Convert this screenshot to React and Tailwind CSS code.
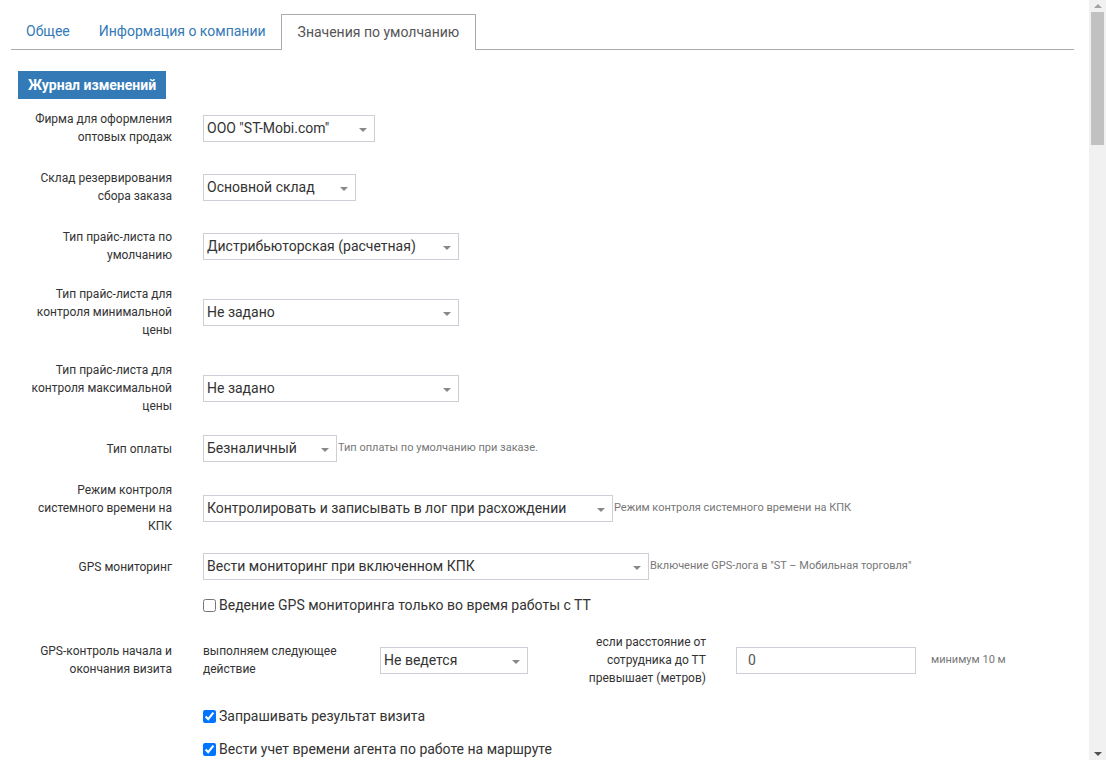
import { useState } from 'react';

const font = { fontFamily: 'Roboto, "Noto Sans", sans-serif' };

// выпадающий список в стиле bootstrap
const Select = ({ value, width }) => (
    <div
        className="relative h-[27px] border border-[#ccd0d6] bg-white flex items-center pl-[3px] text-[14px] text-[#333] shrink-0"
        style={{ width }}
    >
        <span className="whitespace-nowrap">{value}</span>
        <span className="absolute right-[7px] top-[12px] w-0 h-0 border-l-[4px] border-r-[4px] border-t-[4px] border-l-transparent border-r-transparent border-t-[#888]" />
    </div>
);

const Label = ({ children }) => (
    <div className="ml-[8px] w-[146px] shrink-0 text-right text-[12px] leading-[18px] text-[#333]">{children}</div>
);

const Help = ({ children }) => (
    <span className="ml-[1px] text-[11px] text-[#777] whitespace-nowrap">{children}</span>
);

const Row = ({ label, children, className = '' }) => (
    <div className={`flex items-center ${className}`}>
        <Label>{label}</Label>
        <div className="ml-[31px] flex items-center">{children}</div>
    </div>
);

const Check = ({ label, checked, className = '' }) => {
    const [on, setOn] = useState(checked);
    return (
        <label className={`flex items-center pl-[185px] h-[20px] text-[14px] text-[#333] ${className}`}>
            <input
                type="checkbox"
                checked={on}
                onChange={() => setOn((v) => !v)}
                className="w-[13px] h-[13px] m-0 mr-[3px] accent-[#0075ff]"
            />
            <span>{label}</span>
        </label>
    );
};

const tabs = [
    { title: 'Общее', cls: 'px-[15px]' },
    { title: 'Информация о компании', cls: 'pl-[14px] pr-[15px]' },
    { title: 'Значения по умолчанию', cls: 'px-[16px]', active: true },
];

const App = () => {
    return (
        <div className="flex h-[760px] w-[1106px] overflow-hidden bg-white" style={font}>
            <div className="flex-1 overflow-hidden">
                {/* вкладки */}
                <div className="mt-[14px] ml-[11px] mr-[15px] flex border-b border-[#aaa] h-[36px]">
                    {tabs.map((t) =>
                        t.active ? (
                            <div
                                key={t.title}
                                className={`${t.cls} h-[36px] -mb-px bg-white border border-b-0 border-[#aaa] flex items-center text-[14px] text-[#555]`}
                            >
                                {t.title}
                            </div>
                        ) : (
                            <div key={t.title} className={`${t.cls} h-[35px] flex items-center text-[14px] text-[#337ab7]`}>
                                {t.title}
                            </div>
                        )
                    )}
                </div>

                <div className="pl-[18px]">
                    <button className="mt-[21px] h-[28px] px-[10px] bg-[#337ab7] text-white text-[14px] font-bold">
                        Журнал изменений
                    </button>

                    <Row className="mt-[11px]" label="Фирма для оформления оптовых продаж">
                        <Select value={'ООО "ST-Mobi.com"'} width={172} />
                    </Row>
                    <Row className="mt-[23px]" label="Склад резервирования сбора заказа">
                        <Select value="Основной склад" width={153} />
                    </Row>
                    <Row className="mt-[23px]" label="Тип прайс-листа по умолчанию">
                        <Select value="Дистрибьюторская (расчетная)" width={256} />
                    </Row>
                    <Row className="mt-[21px]" label="Тип прайс-листа для контроля минимальной цены">
                        <Select value="Не задано" width={256} />
                    </Row>
                    <Row className="mt-[22px]" label="Тип прайс-листа для контроля максимальной цены">
                        <Select value="Не задано" width={256} />
                    </Row>
                    <Row className="mt-[20px]" label="Тип оплаты">
                        <Select value="Безналичный" width={134} />
                        <Help>Тип оплаты по умолчанию при заказе.</Help>
                    </Row>
                    <Row className="mt-[19px]" label="Режим контроля системного времени на КПК">
                        <Select value="Контролировать и записывать в лог при расхождении" width={410} />
                        <Help>Режим контроля системного времени на КПК</Help>
                    </Row>
                    <Row className="mt-[18px]" label="GPS мониторинг">
                        <Select value="Вести мониторинг при включенном КПК" width={446} />
                        <Help>Включение GPS-лога в "ST – Мобильная торговля"</Help>
                    </Row>

                    <Check className="mt-[15px]" label="Ведение GPS мониторинга только во время работы с ТТ" />

                    <Row className="mt-[18px]" label="GPS-контроль начала и окончания визита">
                        <div className="w-[150px] text-[12px] leading-[18px] text-[#333]">выполняем следующее действие</div>
                        <div className="ml-[27px]">
                            <Select value="Не ведется" width={148} />
                        </div>
                        <div className="ml-[48px] w-[130px] text-right text-[12px] leading-[18px] text-[#333]">
                            если расстояние от сотрудника до ТТ превышает (метров)
                        </div>
                        <input
                            defaultValue="0"
                            className="ml-[30px] w-[180px] h-[27px] border border-[#ccd0d6] px-[11px] text-[14px] text-[#555] outline-none"
                        />
                        <span className="ml-[15px] text-[11px] text-[#777]">минимум 10 м</span>
                    </Row>

                    <Check className="mt-[19px]" checked label="Запрашивать результат визита" />
                    <Check className="mt-[13px]" checked label="Вести учет времени агента по работе на маршруте" />
                </div>
            </div>

            {/* полоса прокрутки */}
            <div className="w-[17px] h-full bg-[#f1f1f1] flex flex-col items-center">
                <div className="h-[12px] flex items-center justify-center">
                    <span className="w-0 h-0 border-l-[4px] border-r-[4px] border-b-[4px] border-l-transparent border-r-transparent border-b-[#a3a3a3]" />
                </div>
                <div className="w-[13px] h-[133px] bg-[#c1c1c1]" />
                <div className="flex-1" />
                <div className="h-[12px] flex items-center justify-center">
                    <span className="w-0 h-0 border-l-[4px] border-r-[4px] border-t-[4px] border-l-transparent border-r-transparent border-t-[#505050]" />
                </div>
            </div>
        </div>
    );
};

export default App;
